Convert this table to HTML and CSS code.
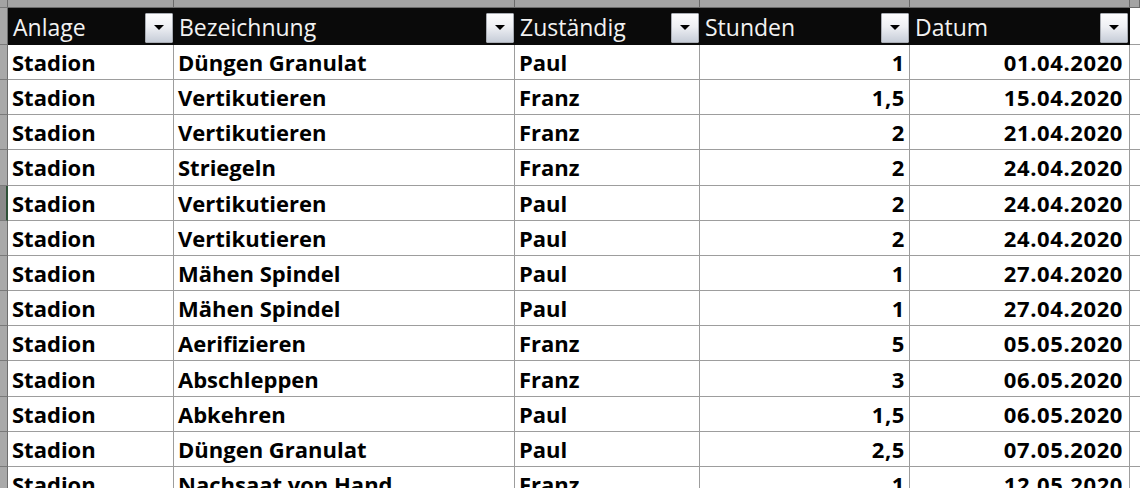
FILE: index.html
```html
<!DOCTYPE html>
<html lang="de">
<head>
<meta charset="utf-8">
<title>Pflegeplan</title>
<link rel="stylesheet" href="styles.css">
</head>
<body>
<div class="sheet">
  <div class="gut top"></div>
  <div class="strip"></div><div class="strip"></div><div class="strip"></div><div class="strip"></div><div class="strip"></div><div class="strip last"></div>

  <div class="gut hd"></div>
  <div class="th"><span>Anlage</span><button class="dd"><i></i></button></div>
  <div class="th"><span>Bezeichnung</span><button class="dd"><i></i></button></div>
  <div class="th"><span>Zuständig</span><button class="dd"><i></i></button></div>
  <div class="th"><span>Stunden</span><button class="dd"><i></i></button></div>
  <div class="th th-date"><span>Datum</span><button class="dd"><i></i></button></div>
  <div class="td blank"></div>

  <div class="gut"></div><div class="td">Stadion</div><div class="td">Düngen Granulat</div><div class="td">Paul</div><div class="td num">1</div><div class="td date">01.04.2020</div><div class="td blank"></div>
  <div class="gut"></div><div class="td">Stadion</div><div class="td">Vertikutieren</div><div class="td">Franz</div><div class="td num">1,5</div><div class="td date">15.04.2020</div><div class="td blank"></div>
  <div class="gut"></div><div class="td">Stadion</div><div class="td">Vertikutieren</div><div class="td">Franz</div><div class="td num">2</div><div class="td date">21.04.2020</div><div class="td blank"></div>
  <div class="gut"></div><div class="td">Stadion</div><div class="td">Striegeln</div><div class="td">Franz</div><div class="td num">2</div><div class="td date">24.04.2020</div><div class="td blank"></div>
  <div class="gut active"></div><div class="td">Stadion</div><div class="td">Vertikutieren</div><div class="td">Paul</div><div class="td num">2</div><div class="td date">24.04.2020</div><div class="td blank"></div>
  <div class="gut"></div><div class="td">Stadion</div><div class="td">Vertikutieren</div><div class="td">Paul</div><div class="td num">2</div><div class="td date">24.04.2020</div><div class="td blank"></div>
  <div class="gut"></div><div class="td">Stadion</div><div class="td">Mähen Spindel</div><div class="td">Paul</div><div class="td num">1</div><div class="td date">27.04.2020</div><div class="td blank"></div>
  <div class="gut"></div><div class="td">Stadion</div><div class="td">Mähen Spindel</div><div class="td">Paul</div><div class="td num">1</div><div class="td date">27.04.2020</div><div class="td blank"></div>
  <div class="gut"></div><div class="td">Stadion</div><div class="td">Aerifizieren</div><div class="td">Franz</div><div class="td num">5</div><div class="td date">05.05.2020</div><div class="td blank"></div>
  <div class="gut"></div><div class="td">Stadion</div><div class="td">Abschleppen</div><div class="td">Franz</div><div class="td num">3</div><div class="td date">06.05.2020</div><div class="td blank"></div>
  <div class="gut"></div><div class="td">Stadion</div><div class="td">Abkehren</div><div class="td">Paul</div><div class="td num">1,5</div><div class="td date">06.05.2020</div><div class="td blank"></div>
  <div class="gut"></div><div class="td">Stadion</div><div class="td">Düngen Granulat</div><div class="td">Paul</div><div class="td num">2,5</div><div class="td date">07.05.2020</div><div class="td blank"></div>
  <div class="gut"></div><div class="td">Stadion</div><div class="td">Nachsaat von Hand</div><div class="td">Franz</div><div class="td num">1</div><div class="td date">12.05.2020</div><div class="td blank"></div>
</div>
</body>
</html>
```

FILE: styles.css
```css
html, body {
  margin: 0;
  padding: 0;
  background: #ffffff;
  overflow: hidden;
}

.sheet {
  display: grid;
  grid-template-columns: 8px 166px 341px 185px 210px 220px 1fr;
  grid-template-rows: 8px 36.8px repeat(13, 35.2px);
  width: 1140px;
  height: 488px;
  overflow: hidden;
  font-family: "Open Sans", "Liberation Sans", sans-serif;
}

.gut {
  box-sizing: border-box;
  background: #a9a9a9;
  border-right: 1px solid #6e6e6e;
  border-bottom: 1px solid #7a7a7a;
}

.gut.top {
  background: #a3a3a3;
}

.gut.active {
  background: #8a8a8a;
  border-right: 2px solid #2f5238;
}

.strip {
  box-sizing: border-box;
  background: #a3a3a3;
  border-right: 1px solid #6a6a6a;
  border-bottom: 1px solid #6a6a6a;
}

.th {
  box-sizing: border-box;
  background: #0a0a0a;
  border-bottom: 1px solid #0a0a0a;
  display: flex;
  align-items: flex-end;
  justify-content: space-between;
  padding: 0 1px 1px 5px;
  color: #f2f2f2;
  font-size: 23px;
  font-weight: 400;
  min-width: 0;
}

.th span {
  align-self: center;
  white-space: nowrap;
  padding-top: 3px;
}

.th-date {
  padding-right: 2px;
}

.dd {
  box-sizing: border-box;
  width: 28px;
  height: 30px;
  margin: 0;
  padding: 0;
  border: 1px solid #a9adb4;
  border-radius: 1px;
  background: linear-gradient(#fdfdfe 0%, #eef0f4 45%, #c7cdd8 100%);
  display: flex;
  align-items: center;
  justify-content: center;
}

.dd i {
  display: block;
  width: 0;
  height: 0;
  border-left: 5px solid transparent;
  border-right: 5px solid transparent;
  border-top: 5px solid #000;
}

.td {
  box-sizing: border-box;
  border-right: 1px solid #9d9d9d;
  border-bottom: 1px solid #9d9d9d;
  display: flex;
  align-items: center;
  padding: 0 5px 0 4px;
  font-size: 22px;
  font-weight: 700;
  color: #000;
  white-space: nowrap;
  overflow: hidden;
  min-width: 0;
}

.num {
  justify-content: flex-end;
  letter-spacing: 0.6px;
  padding-right: 4px;
}

.date {
  justify-content: flex-end;
  letter-spacing: 0.6px;
  padding-right: 6px;
}

.blank {
  border-right: none;
}
```
